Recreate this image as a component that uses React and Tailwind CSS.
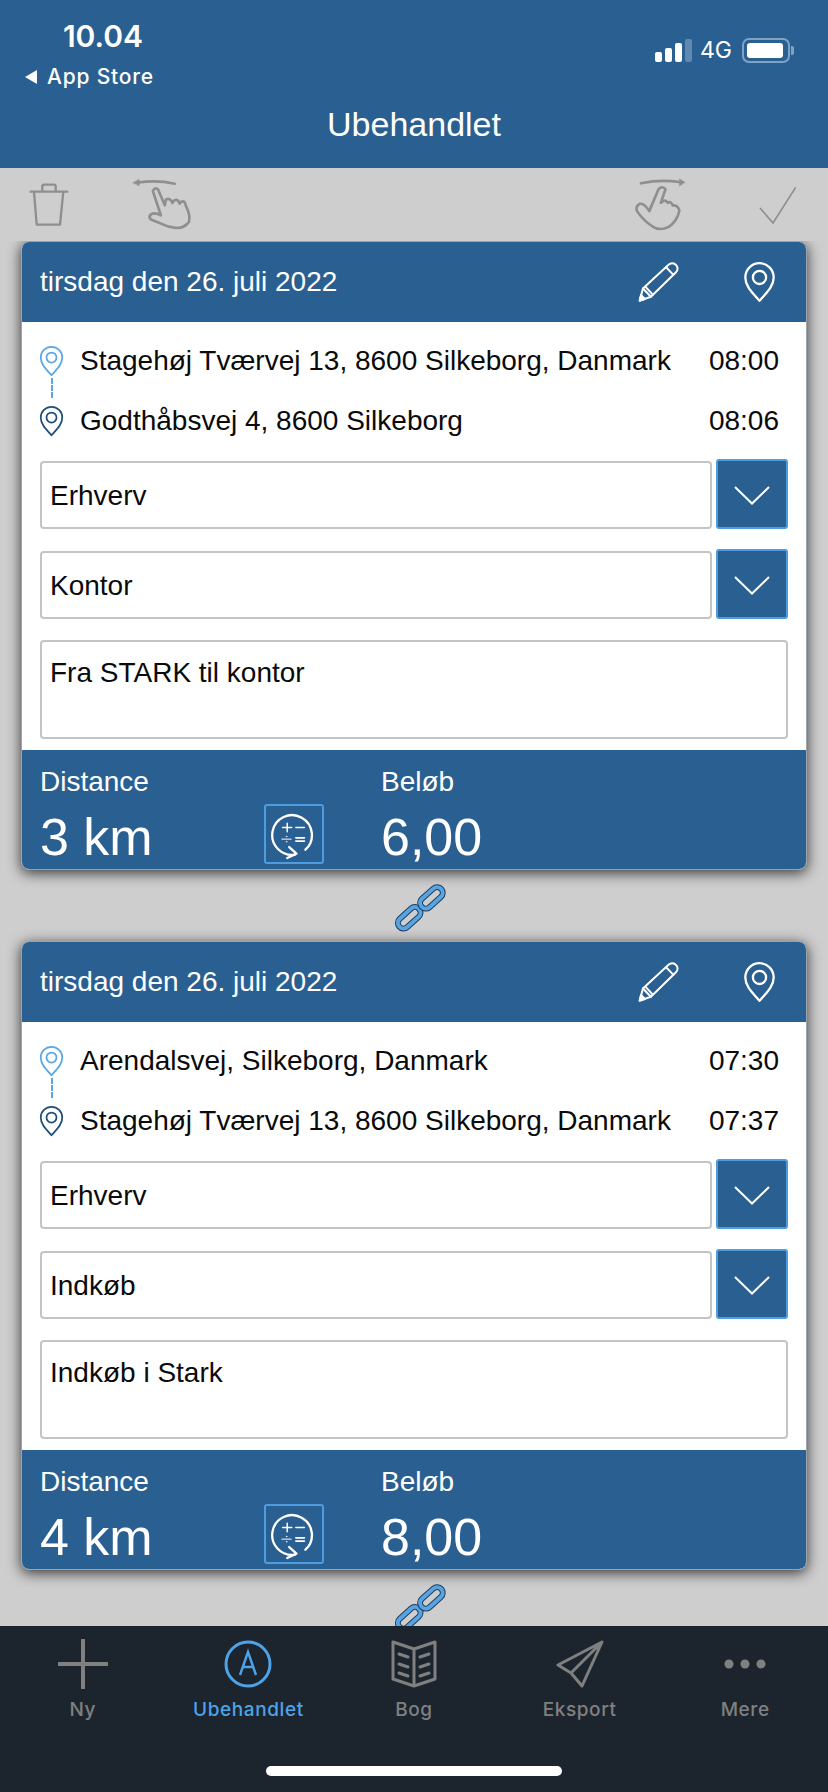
const sans = "font-['Liberation_Sans',Arial,sans-serif]";

function Pin({ className, color = "currentColor" }) {
  return (
    <svg viewBox="425 88 100 126" className={className} fill="none" stroke={color} strokeWidth="7">
      <path d="M475 208C455 185 432 165 432 137A43 43 0 0 1 518 137C518 165 495 185 475 208Z" strokeLinejoin="round" />
      <circle cx="475" cy="137" r="20" />
    </svg>
  );
}

function Pencil() {
  return (
    <svg viewBox="108 88 130 125" className="w-[43px] h-[42px]" fill="none" stroke="white" strokeWidth="6" strokeLinejoin="round" strokeLinecap="round">
      <path d="M116 207L126 170L205 97Q218 90 227 100Q235 112 225 122L150 195Z" />
      <path d="M126 170L150 195M134 165L155 188M196 106L218 129" />
      <path d="M116 207L120 190L132 202Z" fill="white" />
    </svg>
  );
}

function Chevron() {
  return (
    <svg viewBox="0 0 36 20" className="w-[36px] h-[20px] mt-[3px]" fill="none" stroke="white" strokeWidth="2">
      <path d="M1 1L18 17.5L35 1" />
    </svg>
  );
}

function CalcIcon() {
  return (
    <svg viewBox="810 205 145 155" className="w-[48px] h-[52px]" fill="none" stroke="white" strokeLinecap="round">
      <path d="M917 330A60 60 0 1 0 885 345" strokeWidth="7" />
      <path d="M868 322L890 342L862 355" strokeWidth="7" strokeLinejoin="round" />
      <path d="M848 263H876M862 250V276M888 263H914" strokeWidth="4.5" />
      <path d="M846 298H874" strokeWidth="3" />
      <circle cx="860" cy="290" r="1.2" strokeWidth="2" />
      <circle cx="860" cy="306" r="1.2" strokeWidth="2" />
      <path d="M888 294H914M888 304H914" strokeWidth="5" />
    </svg>
  );
}

function LinkIcon() {
  return (
    <svg viewBox="1180 420 160 155" className="w-[53px] h-[52px]" fill="none">
      <g transform="translate(1226 527) rotate(-42)">
        <rect x="-40" y="-17" width="80" height="34" rx="17" stroke="#1f3f5f" strokeWidth="18" />
        <rect x="-40" y="-17" width="80" height="34" rx="17" stroke="#58a3e0" strokeWidth="12" />
      </g>
      <g transform="translate(1293 467) rotate(-42)">
        <rect x="-40" y="-17" width="80" height="34" rx="17" stroke="#1f3f5f" strokeWidth="18" />
        <rect x="-40" y="-17" width="80" height="34" rx="17" stroke="#58a3e0" strokeWidth="12" />
      </g>
    </svg>
  );
}

function Select({ value }) {
  return (
    <div className="flex items-end h-[70px] gap-[4px]">
      <div className="flex-1 h-[68px] border-2 border-[#c4c4c4] rounded-[4px] flex items-center pl-[8px] pt-[1px] text-[28px] text-[#0a0a0a]">
        {value}
      </div>
      <div className="w-[72px] h-[70px] bg-[#2a5f91] border-2 border-[#4d9de0] rounded-[3px] flex items-center justify-center">
        <Chevron />
      </div>
    </div>
  );
}

function Card({ from, fromTime, to, toTime, type, purpose, note, km, amount }) {
  return (
    <div className="bg-white rounded-[8px] overflow-hidden border border-[#9aa3ab] shadow-[0_3px_14px_rgba(0,0,0,0.75)]">
      <div className="h-[80px] bg-[#2a5f91] flex items-center pl-[18px] text-white">
        <span className="text-[28px] flex-1">tirsdag den 26. juli 2022</span>
        <div className="mr-[63px]"><Pencil /></div>
        <div className="mr-[30px]"><Pin className="w-[33px] h-[42px]" color="white" /></div>
      </div>

      <div className="pl-[18px] pr-[18px] pt-[9px] pb-[11px]">
        <div className="relative">
          <div className="h-[60px] flex items-center text-[28px] text-[#0a0a0a]">
            <Pin className="w-[25px] h-[32px] mr-[16px] -ml-[1px]" color="#5ba6e3" />
            <span className="flex-1">{from}</span>
            <span className="mr-[9px]">{fromTime}</span>
          </div>
          <div className="h-[60px] flex items-center text-[28px] text-[#0a0a0a]">
            <Pin className="w-[25px] h-[32px] mr-[16px] -ml-[1px]" color="#1f4e79" />
            <span className="flex-1">{to}</span>
            <span className="mr-[9px]">{toTime}</span>
          </div>
          <div className="absolute left-[10.5px] top-[47px] h-[20px] border-l-2 border-dashed border-[#5ba6e3]" />
        </div>

        <div className="mt-[8px] flex flex-col gap-[20px]">
          <Select value={type} />
          <Select value={purpose} />
        </div>

        <div className="mt-[21px] h-[99px] border-2 border-[#c4c4c4] rounded-[4px] pl-[8px] pt-[15px] text-[28px] leading-[32px] text-[#0a0a0a]">
          {note}
        </div>
      </div>

      <div className="h-[119px] bg-[#2a5f91] flex pl-[18px] text-white">
        <div className="w-[224px]">
          <div className="text-[28px] leading-[30px] mt-[17px]">Distance</div>
          <div className="text-[52px] leading-[56px] mt-[12px]">{km}</div>
        </div>
        <div className="w-[60px] h-[60px] mt-[54px] border-2 border-[#4d9de0] rounded-[3px] flex items-center justify-center">
          <CalcIcon />
        </div>
        <div className="ml-[57px]">
          <div className="text-[28px] leading-[30px] mt-[17px]">Beløb</div>
          <div className="text-[52px] leading-[56px] mt-[12px]">{amount}</div>
        </div>
      </div>
    </div>
  );
}

function Tab({ label, active, children }) {
  return (
    <div className={`flex flex-col items-center ${active ? "text-[#4da3e8]" : "text-[#808080]"}`}>
      <div className="h-[52px] flex items-center justify-center">{children}</div>
      <span className="mt-[8px] text-[19px] leading-[24px] font-medium tracking-[0.6px] font-['Inter',sans-serif]">{label}</span>
    </div>
  );
}

export default function App() {
  return (
    <div className={`w-[828px] h-[1792px] flex flex-col overflow-hidden bg-[#cecece] ${sans}`}>
      {/* Top bar */}
      <header className="h-[168px] shrink-0 bg-[#2a5f91] text-white">
        <div className="h-[98px] flex justify-between pl-[25px] pr-[34px]">
          <div className="w-[156px] flex flex-col font-['Inter',sans-serif]">
            <div className="text-[30px] leading-[36px] font-semibold text-center mt-[18px]">10.04</div>
            <div className="text-[21px] leading-[26px] font-medium mt-[10px] flex items-center gap-[10px] tracking-[0.8px]">
              <span className="w-0 h-0 border-y-[7px] border-y-transparent border-r-[12px] border-r-white" />
              App Store
            </div>
          </div>
          <div className="flex items-center gap-[8px] h-[62px] mt-[19px] self-start font-['Inter',sans-serif]">
            <div className="flex items-end gap-[3px] h-[23px]">
              <span className="w-[7px] h-[10px] bg-white rounded-[2px]" />
              <span className="w-[7px] h-[14px] bg-white rounded-[2px]" />
              <span className="w-[7px] h-[19px] bg-white rounded-[2px]" />
              <span className="w-[7px] h-[23px] bg-[#5f89b0] rounded-[2px]" />
            </div>
            <span className="text-[23px] leading-none">4G</span>
            <div className="flex items-center ml-[2px]">
              <div className="w-[48px] h-[25px] border-2 border-[#7fa3c5] rounded-[7px] p-[3px]">
                <div className="w-[36px] h-full bg-white rounded-[3px]" />
              </div>
              <span className="w-[3px] h-[9px] bg-[#7fa3c5] rounded-r-[2px] ml-[1px]" />
            </div>
          </div>
        </div>
        <div className="text-center text-[34px] leading-[40px] mt-[6px]">Ubehandlet</div>
      </header>

      {/* Swipe actions */}
      <div className="h-[73px] shrink-0 flex items-center justify-between pl-[29px] pr-[31px]">
        <div className="flex items-center gap-[62px]">
          <svg viewBox="85 62 120 132" className="w-[40px] h-[44px]" fill="none" stroke="#8f8f8f" strokeWidth="7" strokeLinejoin="round" strokeLinecap="round">
            <path d="M90 88H200M125 88V72Q125 67 130 67H160Q165 67 165 72V88M100 88L108 187H178L188 88" />
          </svg>
          <svg viewBox="390 50 190 165" className="w-[63px] h-[55px]" fill="none" stroke="#8f8f8f" strokeWidth="8" strokeLinejoin="round" strokeLinecap="round">
            <path d="M522 70Q470 58 412 66" />
            <path d="M395 67L415 56V76Z" fill="#8f8f8f" strokeWidth="1" />
            <path d="M480 165L456 92Q462 78 472 88L492 135L495 118Q508 110 515 128L518 122Q530 112 537 130L540 125Q552 118 555 135Q570 165 565 185Q550 205 525 203Q500 200 480 190L450 178Q442 170 450 162Q462 155 480 165Z" />
          </svg>
        </div>
        <div className="flex items-center gap-[72px]">
          <svg viewBox="105 50 155 160" className="w-[52px] h-[53px]" fill="none" stroke="#8f8f8f" strokeWidth="8" strokeLinejoin="round" strokeLinecap="round">
            <path d="M122 66Q180 54 238 62" />
            <path d="M255 63L238 52V74Z" fill="#8f8f8f" strokeWidth="1" />
            <path d="M147 150L175 84Q186 72 196 84L182 125Q195 112 203 125Q212 118 218 133Q232 130 238 148Q232 180 205 198Q180 210 160 198Q130 180 110 150Q105 135 118 128Q132 125 147 150Z" />
          </svg>
          <svg viewBox="475 72 114 114" className="w-[38px] h-[38px]" fill="none" stroke="#8f8f8f" strokeWidth="5">
            <path d="M478 138L517 183L585 76" />
          </svg>
        </div>
      </div>

      {/* Trips */}
      <main className="flex-1 min-h-0 overflow-hidden px-[21px]">
        <Card
          from="Stagehøj Tværvej 13, 8600 Silkeborg, Danmark"
          fromTime="08:00"
          to="Godthåbsvej 4, 8600 Silkeborg"
          toTime="08:06"
          type="Erhverv"
          purpose="Kontor"
          note="Fra STARK til kontor"
          km="3 km"
          amount="6,00"
        />
        <div className="h-[71px] pt-[12px] pl-[373px]"><LinkIcon /></div>
        <Card
          from="Arendalsvej, Silkeborg, Danmark"
          fromTime="07:30"
          to="Stagehøj Tværvej 13, 8600 Silkeborg, Danmark"
          toTime="07:37"
          type="Erhverv"
          purpose="Indkøb"
          note="Indkøb i Stark"
          km="4 km"
          amount="8,00"
        />
        <div className="h-[71px] pt-[12px] pl-[373px]"><LinkIcon /></div>
      </main>

      {/* Tab bar */}
      <nav className="h-[166px] shrink-0 bg-[#1c252d] relative pt-[12px]">
        <div className="grid grid-cols-5">
          <Tab label="Ny">
            <svg viewBox="0 0 50 50" className="w-[50px] h-[50px]" stroke="currentColor" strokeWidth="4" strokeLinecap="round">
              <path d="M25 1V49M1 25H49" />
            </svg>
          </Tab>
          <Tab label="Ubehandlet" active>
            <svg viewBox="0 0 48 48" className="w-[48px] h-[48px]" fill="none" stroke="currentColor">
              <circle cx="24" cy="24" r="22" strokeWidth="3" />
              <path d="M16 35L24 12L32 35M18.5 27H29.5" strokeWidth="2.4" />
            </svg>
          </Tab>
          <Tab label="Bog">
            <svg viewBox="0 0 46 48" className="w-[46px] h-[48px]" fill="none" stroke="currentColor" strokeWidth="3" strokeLinejoin="round" strokeLinecap="round">
              <path d="M23 9L2 2V39L23 46L44 39V2L23 9V46" />
              <path d="M8 14L17 17M8 24L17 27M8 33L17 36M38 14L29 17M38 24L29 27M38 33L29 36" />
            </svg>
          </Tab>
          <Tab label="Eksport">
            <svg viewBox="0 0 48 48" className="w-[48px] h-[48px]" fill="none" stroke="currentColor" strokeWidth="3" strokeLinejoin="round">
              <path d="M46 2L2 25L15 33L26 46L46 2L15 33" />
            </svg>
          </Tab>
          <Tab label="Mere">
            <svg viewBox="0 0 42 10" className="w-[42px] h-[10px]" fill="currentColor">
              <circle cx="5" cy="5" r="4.5" />
              <circle cx="21" cy="5" r="4.5" />
              <circle cx="37" cy="5" r="4.5" />
            </svg>
          </Tab>
        </div>
        <div className="absolute left-[266px] top-[140px] w-[296px] h-[10px] bg-white rounded-full" />
      </nav>
    </div>
  );
}
